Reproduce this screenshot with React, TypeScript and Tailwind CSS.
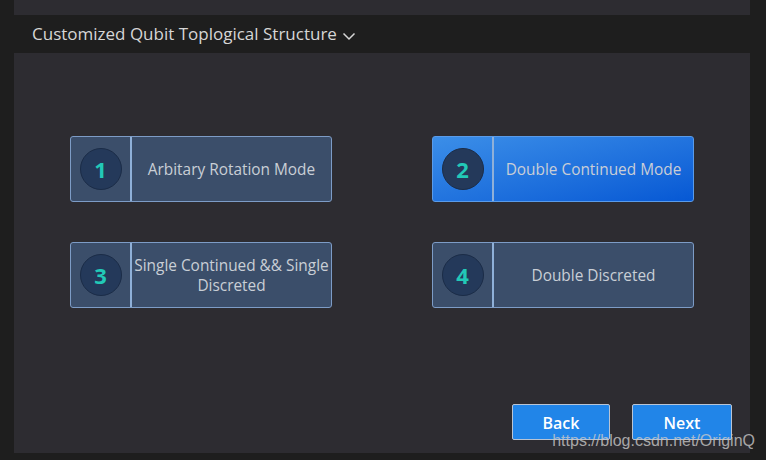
import { FC } from "react"
import { twJoin } from "tailwind-merge"

const modes = [
  { n: "1", label: "Arbitary Rotation Mode", active: false },
  { n: "2", label: "Double Continued Mode", active: true },
  { n: "3", label: "Single Continued && Single Discreted", active: false },
  { n: "4", label: "Double Discreted", active: false },
]

const ModeCard: FC<{ n: string; label: string; active: boolean }> = ({ n, label, active }) => {
  return (
    <div
      className={twJoin(
        "flex h-[66px] w-[262px] rounded-[3px] border",
        active
          ? "border-[#5a9be8] bg-gradient-to-br from-[#3b8ee8] to-[#0658d4]"
          : "border-[#7d9cc6] bg-[#3b4e6a]",
      )}
    >
      <div className="flex w-[61px] shrink-0 items-center justify-center border-r-2 border-[#8fb0d8]">
        <div className="flex h-[42px] w-[42px] items-center justify-center rounded-full border border-[#1b2c47] bg-[#24395a] text-[22px] font-bold text-[#22c9b7]">
          {n}
        </div>
      </div>
      <div className="flex grow items-center justify-center pt-[1px] text-center text-[15.4px] leading-[20px] text-[#c9ced6]">
        {label}
      </div>
    </div>
  )
}

export default function App() {
  return (
    <div
      className="h-[460px] w-[766px] overflow-hidden bg-[#1e1e1e] px-[14px] pr-[16px]"
      style={{ fontFamily: '"Open Sans", "Noto Sans", sans-serif' }}
    >
      <div className="h-[15px] bg-[#2d2c31]" />
      <div className="flex h-[38px] items-center gap-[5px] pl-[18px] text-[17px] text-[#d6d6d6]">
        <span>Customized Qubit Toplogical Structure</span>
        <svg width="14" height="14" viewBox="0 0 14 14" className="mt-[3px]">
          <path d="M1.5 4.5 L7 10 L12.5 4.5" fill="none" stroke="#d6d6d6" strokeWidth="1.5" />
        </svg>
      </div>
      <div className="relative flex h-[400px] flex-col bg-[#2d2c31]">
        <div className="grid grid-cols-[262px_262px] gap-x-[100px] gap-y-[40px] pl-[56px] pt-[83px]">
          {modes.map((m) => (
            <ModeCard key={m.n} {...m} />
          ))}
        </div>
        <div className="mt-auto mb-[13px] flex justify-end gap-[22px] pr-[18px]">
          <button className="h-[36px] w-[98px] rounded-[2px] border border-[#b8c4d4] bg-[#2185e8] pt-[2px] text-[16px] font-semibold text-white">
            Back
          </button>
          <button className="h-[36px] w-[100px] rounded-[2px] border border-[#b8c4d4] bg-[#2185e8] pt-[2px] text-[16px] font-semibold text-white">
            Next
          </button>
        </div>
        <div
          className="absolute bottom-[0px] right-[-5px] text-[16px] text-[#c8c8c8]/80"
          style={{ fontFamily: '"Liberation Sans", sans-serif' }}
        >
          https://blog.csdn.net/OriginQ
        </div>
      </div>
    </div>
  )
}
